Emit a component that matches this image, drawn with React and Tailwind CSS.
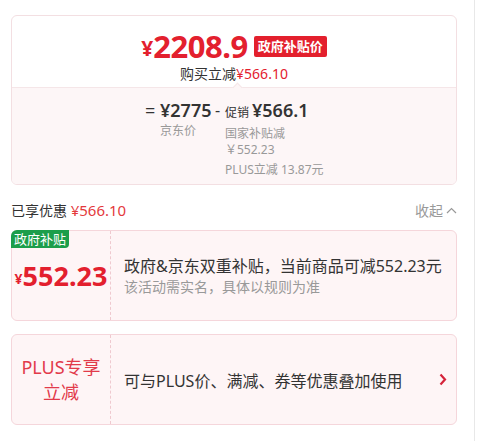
export default function App() {
  return (
    <div className="w-[478px] h-[441px] bg-white font-['Noto_Sans','Noto_Sans_CJK_SC',sans-serif]">
      <div className="w-[475px] h-[441px] border-r border-[#e8e8e8] pl-[11px] pr-[17px] pt-[15px]">

        {/* PRICE CARD */}
        <div className="rounded-md border border-[#f3dfe2] overflow-hidden">
          <div className="h-[71px] flex flex-col items-center pt-[14px]">
            <div className="flex items-center h-[32px]">
              <span className="text-[21px] font-bold text-[#e3202e] leading-none mt-[4px]">¥</span>
              <span className="text-[31px] font-bold text-[#e3202e] leading-none tracking-[-0.5px]">2208.9</span>
              <span className="ml-[6px] bg-[#e3202d] text-white text-[13px] font-bold px-[4px] h-[21px] leading-[21px] rounded-[2px]">政府补贴价</span>
            </div>
            <div className="text-[14px] leading-[20px] text-[#333] mt-[2px]">
              购买立减<span className="text-[#e3202e]">¥566.10</span>
            </div>
          </div>
          <div className="relative h-[97px] border-t border-[#f5e6e8] bg-[#fdf6f7] pl-[133px] pt-[10px] text-[#333]">
            <div className="absolute left-[222px] -top-[4px] w-[7px] h-[7px] rotate-45 bg-[#fdf6f7] border-l border-t border-[#f5e6e8]"></div>
            <div className="flex">
              <div className="w-[15px] text-[18px] leading-[24px]">=</div>
              <div className="w-[55px]">
                <div className="text-[18px] leading-[24px] font-semibold">¥2775</div>
                <div className="text-[12px] leading-[16px] text-[#999] mt-[1px]">京东价</div>
              </div>
              <div className="w-[10px] text-[16px] leading-[24px]">-</div>
              <div>
                <div className="flex items-baseline leading-[24px]">
                  <span className="text-[12px]">促销</span>
                  <span className="text-[18px] font-semibold ml-[3px]">¥566.1</span>
                </div>
                <div className="text-[12px] leading-[16px] text-[#999] mt-[1px]">国家补贴减</div>
                <div className="text-[12px] leading-[16px] text-[#999]">￥552.23</div>
                <div className="text-[12px] leading-[16px] text-[#999] mt-[4px]">PLUS立减 13.87元</div>
              </div>
            </div>
          </div>
        </div>

        {/* SAVED */}
        <div className="flex items-center justify-between h-[24px] mt-[13px]">
          <div className="text-[14px] text-[#333]">
            已享优惠 <span className="text-[15px] text-[#e4393c]">¥566.10</span>
          </div>
          <div className="flex items-center text-[14px] text-[#999]">
            收起
            <svg width="11" height="7" viewBox="0 0 11 7" className="ml-[3px]">
              <path d="M1 6 L5.5 1.5 L10 6" fill="none" stroke="#999" strokeWidth="1.2" />
            </svg>
          </div>
        </div>

        {/* GOV SUBSIDY */}
        <div className="relative flex h-[91px] mt-[8px] rounded-md border border-[#f5d6db] bg-[#fef5f6]">
          <div className="absolute -left-px -top-px bg-[#1c9e4b] text-white text-[13px] leading-[18px] px-[3px] rounded-tl-md rounded-br-[4px]">政府补贴</div>
          <div className="w-[99px] flex items-center justify-center border-r border-dashed border-[#efc9cf]">
            <span className="text-[14px] font-bold text-[#e3202e] mt-[6px]">¥</span>
            <span className="text-[27px] font-bold text-[#e3202e] leading-none">552.23</span>
          </div>
          <div className="flex flex-col justify-center pl-[13px] pt-[2px]">
            <div className="text-[16px] leading-[21px] text-[#333]">政府&amp;京东双重补贴，当前商品可减552.23元</div>
            <div className="text-[14px] leading-[20px] text-[#999]">该活动需实名，具体以规则为准</div>
          </div>
        </div>

        {/* PLUS */}
        <div className="flex h-[91px] mt-[13px] rounded-md border border-[#f5d6db] bg-[#fef5f6]">
          <div className="w-[99px] flex flex-col items-center justify-center border-r border-dashed border-[#efc9cf] text-[18px] leading-[25px] text-[#e23a4a]">
            <div>PLUS专享</div>
            <div>立减</div>
          </div>
          <div className="flex-1 flex items-center justify-between pl-[13px] pr-[9px]">
            <div className="text-[16px] text-[#333] mt-[2px]">可与PLUS价、满减、券等优惠叠加使用</div>
            <svg width="8" height="13" viewBox="0 0 8 13">
              <path d="M1.5 1.5 L6 6.5 L1.5 11.5" fill="none" stroke="#d5233a" strokeWidth="2.2" />
            </svg>
          </div>
        </div>

      </div>
    </div>
  );
}
